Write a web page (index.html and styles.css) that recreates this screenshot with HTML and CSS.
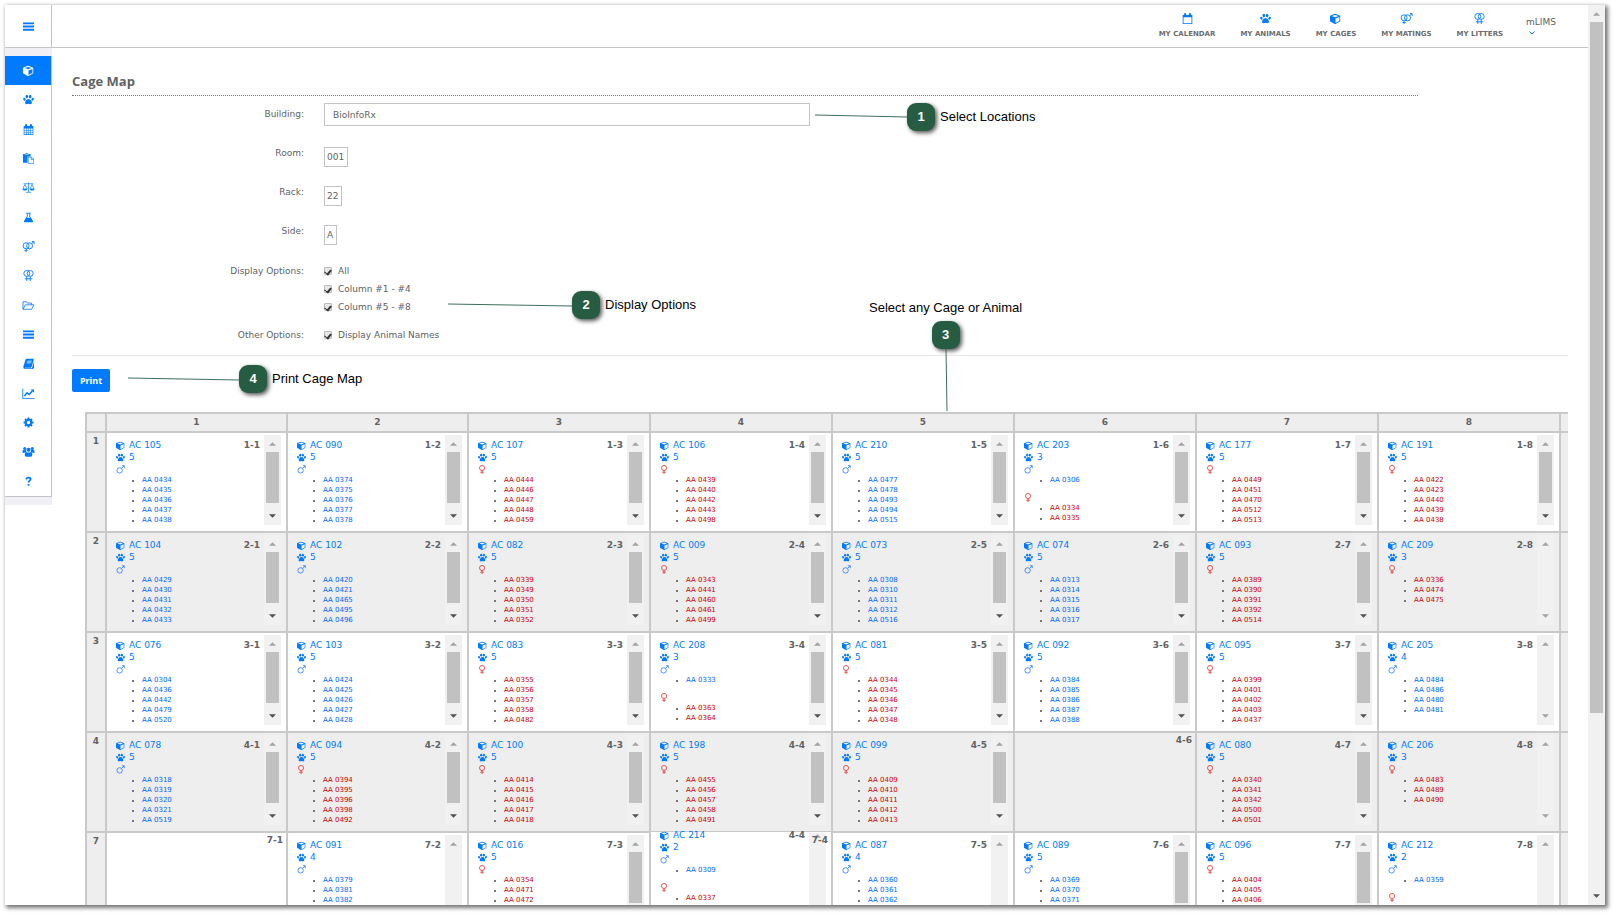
FILE: index.html
```html
<!DOCTYPE html>
<html lang="en">
<head>
<meta charset="utf-8">
<title>Cage Map</title>
<link rel="stylesheet" href="styles.css">
</head>
<body>
<svg class="sprite" aria-hidden="true">
  <symbol id="cube" viewBox="0 0 1792 1792"><path d="M896 1629l640-349v-636l-640 233v752zm768-1117v768q0 35-18 65t-49 47l-704 384q-28 16-61 16t-61-16l-704-384q-31-17-49-47t-18-65v-768q0-40 23-73t61-47l704-256q22-8 44-8t44 8l704 256q38 14 61 47t23 73zM832 700l560-200-560-190-560 190z" fill-rule="evenodd"/></symbol>
  <symbol id="paw" viewBox="0 0 16 16"><ellipse cx="5.6" cy="3.8" rx="1.9" ry="2.6"/><ellipse cx="10.4" cy="3.8" rx="1.9" ry="2.6"/><ellipse cx="2" cy="7.6" rx="1.7" ry="2.2" transform="rotate(-20 2 7.6)"/><ellipse cx="14" cy="7.6" rx="1.7" ry="2.2" transform="rotate(20 14 7.6)"/><path d="M8 7.2c2.4 0 5 3.4 5 5.6 0 1.600-1.300 2-2.400 2-1 0-1.600-.6-2.600-.6s-1.700.6-2.700.6c-1.200 0-2.300-.5-2.300-2C3 10.600 5.600 7.200 8 7.200z"/></symbol>
  <symbol id="calendar" viewBox="0 0 16 16"><path d="M1 3h2V1.500a1 1 0 0 1 3 0V3h4V1.500a1 1 0 0 1 3 0V3h2v13H1zm1 3.500V9h2.400V6.500zm3.200 0V9h2.400V6.500zm3.200 0V9h2.400V6.500zm3.200 0V9H14V6.500zM2 9.800v2.200h2.400V9.800zm3.200 0v2.200h2.400V9.800zm3.200 0v2.200h2.400V9.800zm3.200 0v2.200H14V9.800zM2 12.800V15h2.400v-2.200zm3.200 0V15h2.400v-2.200zm3.200 0V15h2.400v-2.200zm3.200 0V15H14v-2.200z" fill-rule="evenodd"/></symbol>
  <symbol id="calendar-o" viewBox="0 0 16 16"><path d="M1 3h2V1.500a1 1 0 0 1 3 0V3h4V1.500a1 1 0 0 1 3 0V3h2v13H1zm1.200 3v8.800h11.600V6z" fill-rule="evenodd"/></symbol>
  <symbol id="paste" viewBox="0 0 16 16"><path d="M0 1.500h3.500V.5h4v1H11V5H6.500v9H0zM2.500 2v1h6V2z" fill-rule="evenodd"/><path d="M7.500 6h5l3 3v6.500h-8z M12 6v3.500h3.500" fill="none" stroke="currentColor"/></symbol>
  <symbol id="scale" viewBox="0 0 18 16"><path d="M9 1v13.500M2 2.500h14M5 15h8M.8 10l3-6.500L6.800 10zM11.200 10l3-6.500 3 6.500z" fill="none" stroke="currentColor"/><path d="M.3 10h7a3.500 2.200 0 0 1-7 0zM10.700 10h7a3.500 2.200 0 0 1-7 0z"/></symbol>
  <symbol id="flask" viewBox="0 0 16 16"><path d="M4.500 1h7v1.300h-1v4.200l4 6.500q1 2-1.200 2H2.700q-2.200 0-1.200-2l4-6.500V2.300h-1zm2.300 1.300v4.600L5.800 8.500h4.400l-1-1.600V2.300z" fill-rule="evenodd"/></symbol>
  <symbol id="mating" viewBox="0 0 18 16"><g fill="none" stroke="currentColor" stroke-width="1.300"><circle cx="5.500" cy="7" r="4.400"/><circle cx="10.500" cy="7" r="4.400"/><path d="M5.500 11.400V16M3.200 13.800h4.600M13.600 3.900L17 1M13.800.9h3.400V4.200"/></g></symbol>
  <symbol id="litters" viewBox="0 0 18 16"><g fill="none" stroke="currentColor" stroke-width="1.300"><circle cx="6.500" cy="5" r="4.300"/><circle cx="11.500" cy="5" r="4.300"/><path d="M6.500 9.300V16M11.500 9.300V16M3.500 12.800h11"/></g></symbol>
  <symbol id="folder" viewBox="0 0 18 16"><path d="M1 13V2.500h5l1.500 2h6V7M1 13.500L4.500 7H17l-3.500 6.500z" fill="none" stroke="currentColor" stroke-width="1.200" stroke-linejoin="round"/></symbol>
  <symbol id="bars" viewBox="0 0 16 16"><path d="M0 2h16v2.900H0zM0 6.600h16v2.900H0zM0 11.200h16v2.900H0z"/></symbol>
  <symbol id="book" viewBox="0 0 16 16"><path d="M5.500 1H15q1 .4.700 1.500l-3 10q-.4 1.500-1.700 1.500H3q-.8.200-.6.800H13l3-9.500V14q-1 2-2.500 2H2.500Q0 15.500.5 12.500L3.500 3Q4 1 5.500 1zm.8 3-.3 1h6.500l.3-1zm-.8 2.500-.3 1h6.500l.3-1z" fill-rule="evenodd"/></symbol>
  <symbol id="chart" viewBox="0 0 18 16"><path d="M.6 1v14.400H18" fill="none" stroke="currentColor" stroke-width="1.200"/><path d="M3 11.500l4-4.500 3 2.500 4.500-5" fill="none" stroke="currentColor" stroke-width="2.200"/><path d="M12 2h5v5z"/></symbol>
  <symbol id="cog" viewBox="0 0 16 16"><circle cx="8" cy="8" r="4" fill="none" stroke="currentColor" stroke-width="3"/><path d="M8 .8v2.800M8 12.400v2.800M.8 8h2.800M12.400 8h2.800M2.900 2.900l2 2M11.100 11.100l2 2M13.100 2.900l-2 2M4.900 11.100l-2 2" fill="none" stroke="currentColor" stroke-width="3"/></symbol>
  <symbol id="users" viewBox="0 0 18 16"><circle cx="3.500" cy="3.500" r="2.200"/><circle cx="14.500" cy="3.500" r="2.200"/><circle cx="9" cy="5.500" r="3"/><path d="M0 9q0-3.200 2-3.200h3.200Q5 8 6.500 9H3.800L3 10Q0 10 0 9zM18 9q0-3.200-2-3.200h-3.200Q13 8 11.500 9h2.700l.8 1q3 0 3-1zM3.500 13Q3.500 8.800 6 8.800q3 1.500 6 0 2.500 0 2.500 4.200 0 2.500-2.500 2.500H6q-2.500 0-2.500-2.500z"/></symbol>
  <symbol id="question" viewBox="0 0 16 16"><path d="M4.500 5Q5 2.300 8 2.300t3 2.400c0 2-3 2.200-3 4.800" fill="none" stroke="currentColor" stroke-width="2.600"/><path d="M6.600 11.500h2.800V14H6.600z"/></symbol>
  <symbol id="male" viewBox="0 0 10 10"><g fill="none" stroke="currentColor" stroke-width=".9"><circle cx="4" cy="6" r="3"/><path d="M6.200 3.800L9 1M6.500.8h2.700v2.700"/></g></symbol>
  <symbol id="female" viewBox="0 0 10 10"><g fill="none" stroke="currentColor" stroke-width=".9"><circle cx="4.500" cy="3.300" r="2.800"/><path d="M4.500 6.100V10M2.500 8h4"/></g></symbol>
  <symbol id="up" viewBox="0 0 8 4"><path d="M0 4l4-4 4 4z"/></symbol>
  <symbol id="down" viewBox="0 0 8 4"><path d="M0 0l4 4 4-4z"/></symbol>
</svg>

<div class="app">
  <header class="topbar">
    <button class="menu" aria-label="Menu"><svg class="icon"><use href="#bars"/></svg></button>
    <nav class="shortcuts" aria-label="Shortcuts">
      <a href="#"><svg class="icon"><use href="#calendar-o"/></svg>MY CALENDAR</a>
      <a href="#"><svg class="icon"><use href="#paw"/></svg>MY ANIMALS</a>
      <a href="#"><svg class="icon"><use href="#cube"/></svg>MY CAGES</a>
      <a href="#"><svg class="icon wide"><use href="#mating"/></svg>MY MATINGS</a>
      <a href="#"><svg class="icon wide"><use href="#litters"/></svg>MY LITTERS</a>
    </nav>
    <button class="account">mLIMS
      <svg class="chevron" viewBox="0 0 6 4"><path d="M.5.5L3 3 5.500.5" fill="none" stroke="currentColor"/></svg>
    </button>
  </header>

  <aside class="sidebar">
    <nav class="side-nav" aria-label="Sections">
      <a class="active" href="#" aria-label="Cages"><svg class="icon"><use href="#cube"/></svg></a>
      <a href="#" aria-label="Animals"><svg class="icon"><use href="#paw"/></svg></a>
      <a href="#" aria-label="Calendar"><svg class="icon"><use href="#calendar"/></svg></a>
      <a href="#" aria-label="Tasks"><svg class="icon"><use href="#paste"/></svg></a>
      <a href="#" aria-label="Weights"><svg class="icon wide"><use href="#scale"/></svg></a>
      <a href="#" aria-label="Experiments"><svg class="icon"><use href="#flask"/></svg></a>
      <a href="#" aria-label="Matings"><svg class="icon wide"><use href="#mating"/></svg></a>
      <a href="#" aria-label="Litters"><svg class="icon wide"><use href="#litters"/></svg></a>
      <a href="#" aria-label="Files"><svg class="icon wide"><use href="#folder"/></svg></a>
      <a href="#" aria-label="Lists"><svg class="icon"><use href="#bars"/></svg></a>
      <a href="#" aria-label="Records"><svg class="icon"><use href="#book"/></svg></a>
      <a href="#" aria-label="Reports"><svg class="icon wide"><use href="#chart"/></svg></a>
      <a href="#" aria-label="Settings"><svg class="icon"><use href="#cog"/></svg></a>
      <a href="#" aria-label="Users"><svg class="icon wide"><use href="#users"/></svg></a>
      <a href="#" aria-label="Help"><svg class="icon"><use href="#question"/></svg></a>
    </nav>
  </aside>

  <main class="content">
    <h1>Cage Map</h1>
    <form class="filters">
      <div class="field"><label for="building">Building:</label><select id="building" class="full"><option>BioInfoRx</option></select></div>
      <div class="field"><label for="room">Room:</label><select id="room"><option>001</option></select></div>
      <div class="field"><label for="rack">Rack:</label><select id="rack"><option>22</option></select></div>
      <div class="field"><label for="side">Side:</label><select id="side"><option>A</option></select></div>
      <div class="field options" role="group" aria-labelledby="display-label">
        <span id="display-label">Display Options:</span>
        <div class="checks">
          <label><input type="checkbox" checked>All</label>
          <label><input type="checkbox" checked>Column #1 - #4</label>
          <label><input type="checkbox" checked>Column #5 - #8</label>
        </div>
      </div>
      <div class="field options" role="group" aria-labelledby="other-label">
        <span id="other-label">Other Options:</span>
        <div class="checks"><label><input type="checkbox" checked>Display Animal Names</label></div>
      </div>
    </form>
    <hr>
    <button class="print">Print</button>
    <div class="map">
      <table>
        <colgroup><col class="rail"><col class="slim"><col class="slim"><col><col><col><col><col><col><col class="rail"></colgroup>
        <thead><tr><th></th><th>1</th><th>2</th><th>3</th><th>4</th><th>5</th><th>6</th><th>7</th><th>8</th><th></th></tr></thead>
        <tbody id="rows"></tbody>
      </table>
    </div>

    <svg class="leaders" aria-hidden="true">
      <path d="M763 67l92 2M396 256l124 2M894 301l1 62M76 330l111 2"/>
    </svg>
    <div class="callout c1"><b>1</b>Select Locations</div>
    <div class="callout c2"><b>2</b>Display Options</div>
    <div class="callout stacked c3">Select any Cage or Animal<b>3</b></div>
    <div class="callout c4"><b>4</b>Print Cage Map</div>
  </main>

  <div class="scrollbar page-scroll"><svg><use href="#up"/></svg><i></i><svg class="on"><use href="#down"/></svg></div>
</div>
<script src="cages.js"></script>
</body>
</html>
```
FILE: styles.css
```css
* { box-sizing: border-box; }

body {
  margin: 0;
  padding: 5px 9px 9px 5px;
  background: #fff;
  color: #626262;
  font: 9px/12px "DejaVu Sans", Verdana, sans-serif;
}

a { color: #007aff; text-decoration: none; }
button, select { font: inherit; color: inherit; }
.sprite { position: absolute; width: 0; height: 0; }
svg { fill: currentColor; }

.app {
  display: grid;
  grid-template: 43px 1fr / 47px 1fr 17px;
  height: calc(100vh - 14px);
  overflow: hidden;
  box-shadow: 2px 2px 4px 1px #777;
}

.icon { width: 11px; height: 11px; flex: none; color: #007aff; }
.icon.wide { width: 13px; }

/* Top bar */
.topbar {
  grid-column: 1 / 3;
  display: flex;
  border-bottom: 1px solid #c4c4c8;
}
.menu {
  display: grid;
  place-items: center;
  width: 47px;
  padding: 1px 0 0;
  border: 0;
  border-right: 1px solid #c4c4c8;
  background: none;
}
.shortcuts {
  display: flex;
  gap: 25px;
  margin-left: auto;
  padding-top: 8px;
}
.shortcuts a {
  display: flex;
  flex-direction: column;
  align-items: center;
  gap: 4px;
  color: #6c6c6c;
  font-size: 7px;
  font-weight: bold;
}
.account {
  display: flex;
  flex-direction: column;
  align-items: flex-start;
  margin: 0 32px 0 23px;
  padding: 11px 0 0;
  border: 0;
  background: none;
}
.chevron { width: 6px; height: 4px; margin: 3px; color: #007aff; }

/* Sidebar */
.sidebar {
  align-self: start;
  padding: 8px 0;
  background: #f0eff5;
}
.side-nav {
  display: grid;
  grid-auto-rows: 1fr;
  height: 441px;
  border: solid #c4c4c8;
  border-width: 0 1px 1px 0;
  background: #fff;
}
.side-nav a { display: grid; place-items: center; }
.side-nav .active { background: #007aff; }
.side-nav .active .icon { color: #fff; }

/* Content */
.content {
  position: relative;
  min-width: 0;
  overflow: hidden;
  padding: 23px 20px 0;
}
h1 {
  width: 90%;
  height: 25px;
  margin: 0;
  border-bottom: 1px dotted #777;
  font: bold 13px/20px "Open Sans", sans-serif;
}
.filters { padding-top: 7px; }
.field {
  display: flex;
  gap: 20px;
  height: 39px;
}
.field > label, .field > span {
  width: 232px;
  padding-top: 5px;
  text-align: right;
}
.field select {
  appearance: none;
  align-self: flex-start;
  height: 20px;
  margin-top: 5px;
  padding: 0 2px;
  border: 1px solid #c4c4c8;
  border-radius: 0;
  background: #fff;
}
.field .full {
  width: 486px;
  height: 23px;
  margin-top: 0;
  padding: 0 8px;
}
.field.options { height: auto; padding: 1px 0 9px; }
.checks label {
  display: flex;
  align-items: center;
  gap: 6px;
  height: 18px;
  padding-top: 4px;
}
.checks input {
  appearance: none;
  display: grid;
  place-items: center;
  width: 8px;
  height: 8px;
  margin: 0;
  border: 1px solid #bbb;
  border-radius: 1px;
  background: #e8e8e8;
}
.checks input:checked::before {
  content: "";
  width: 5px;
  height: 3px;
  border: solid #333;
  border-width: 0 0 2px 1px;
  transform: rotate(-50deg);
}
hr {
  height: 1px;
  margin: 4px 0 13px;
  border: 0;
  background: #e8e8e8;
}
.print {
  display: block;
  height: 23px;
  padding: 0 8px;
  border: 0;
  border-radius: 2px;
  background: #007aff;
  color: #fff;
  font: bold 9px/12px "Noto Sans", sans-serif;
}

/* Cage table */
.map { margin: 20px 0 0 13px; overflow: hidden; }
table {
  width: 1494px;
  table-layout: fixed;
  border-collapse: collapse;
}
col { width: 182px; }
.slim { width: 181px; }
.rail { width: 20px; }
th, td { border: 2px solid #c9c9c9; padding: 0; vertical-align: top; }
th { height: 19px; background: #eee; }
tbody th { padding-top: 2px; }
thead th { vertical-align: middle; line-height: 11px; }
tbody tr { height: 100px; }
tbody tr:nth-child(even) { background: #eee; }
.slot { display: block; padding: 1px 3px; text-align: right; font-weight: bold; }
.cage {
  display: flex;
  height: 90px;
  margin: 2px 5px 0 2px;
}
.info { flex: 1; padding: 4px 4px 0 7px; }
.line { display: flex; align-items: center; gap: 4px; height: 12px; }
.line .icon { width: 9px; height: 9px; }
.line b { margin-left: auto; }
.info .female { color: #d33; }
.info .male { color: #2a7bff; }
.info ul {
  margin: 0 0 6px;
  padding: 0 0 0 26px;
  list-style: none;
  font-size: 7px;
  line-height: 10px;
}
.info li { position: relative; }
.info li::before {
  content: "";
  position: absolute;
  left: -10px;
  top: 5px;
  width: 2px;
  height: 2px;
  background: #777;
}
.info li .f { color: #c00; }
.info li .m { color: #06f; }

/* A cage listed under another slot rides over the row line */
.spill {
  position: relative;
  display: flow-root;
  height: 90px;
  margin-top: -1px;
  background: #fff;
}
.spill .cage { margin-top: -7px; height: 98px; }
.spill .scrollbar { margin-top: 8px; padding-top: 1px; }
.spill .slot { position: absolute; top: 1px; right: 0; }

/* Scrollbars */
.scrollbar {
  display: flex;
  flex-direction: column;
  align-items: center;
  width: 17px;
  padding: 7px 0;
  background: #f1f1f1;
  color: #a3a3a3;
}
.scrollbar svg { width: 7px; height: 4px; flex: none; }
.scrollbar .on { margin-top: auto; color: #505050; }
.scrollbar .off { margin-top: auto; }
.scrollbar i { width: 13px; height: 51px; margin-top: 6px; background: #c1c1c1; }
.page-scroll { grid-area: 1 / 3 / 3 / 4; }
.page-scroll i { height: 78%; }

/* Callouts */
.leaders {
  position: absolute;
  inset: 0;
  width: 100%;
  height: 100%;
  fill: none;
  stroke: #3d6f58;
  pointer-events: none;
}
.callout {
  position: absolute;
  display: flex;
  align-items: center;
  gap: 5px;
  color: #000;
  font: 13px/16px "Liberation Sans", Arial, sans-serif;
}
.callout b {
  display: grid;
  place-items: center;
  width: 28px;
  height: 28px;
  border-radius: 9px;
  background: #265c42;
  box-shadow: 2px 2px 4px #555;
  color: #fff;
}
.stacked { flex-direction: column; }
.c1 { left: 855px; top: 55px; }
.c2 { left: 520px; top: 243px; }
.c3 { left: 817px; top: 252px; }
.c4 { left: 187px; top: 317px; }
```
FILE: cages.js
```js
// slot: [cage, male ids, female ids, optional total, more females below]
const rows = [
  [1, [
    ["105", "0434 0435 0436 0437 0438", ""], ["090", "0374 0375 0376 0377 0378", ""],
    ["107", "", "0444 0446 0447 0448 0459"], ["106", "", "0439 0440 0442 0443 0498"],
    ["210", "0477 0478 0493 0494 0515", ""], ["203", "0306", "0334 0335"],
    ["177", "", "0449 0451 0470 0512 0513"], ["191", "", "0422 0423 0440 0439 0438"]]],
  [2, [
    ["104", "0429 0430 0431 0432 0433", ""], ["102", "0420 0421 0465 0495 0496", ""],
    ["082", "", "0339 0349 0350 0351 0352"], ["009", "", "0343 0441 0460 0461 0499"],
    ["073", "0308 0310 0311 0312 0516", ""], ["074", "0313 0314 0315 0316 0317", ""],
    ["093", "", "0389 0390 0391 0392 0514"], ["209", "", "0336 0474 0475"]]],
  [3, [
    ["076", "0304 0436 0442 0479 0520", ""], ["103", "0424 0425 0426 0427 0428", ""],
    ["083", "", "0355 0356 0357 0358 0482"], ["208", "0333", "0363 0364"],
    ["081", "", "0344 0345 0346 0347 0348"], ["092", "0384 0385 0386 0387 0388", ""],
    ["095", "", "0399 0401 0402 0403 0437"], ["205", "0484 0486 0480 0481", ""]]],
  [4, [
    ["078", "0318 0319 0320 0321 0519", ""], ["094", "", "0394 0395 0396 0398 0492"],
    ["100", "", "0414 0415 0416 0417 0418"], ["198", "", "0455 0456 0457 0458 0491"],
    ["099", "", "0409 0410 0411 0412 0413"], null,
    ["080", "", "0340 0341 0342 0500 0501"], ["206", "", "0483 0489 0490"]]],
  [7, [
    null, ["091", "0379 0381 0382", "", 4],
    ["016", "", "0354 0471 0472", 5], ["214", "0309", "0337"],
    ["087", "0360 0361 0362", "", 4], ["089", "0369 0370 0371", "", 5],
    ["096", "", "0404 0405 0406", 5], ["212", "0359", "", 2, true]]]
];

const icon = (name, cls = "") => `<svg class="icon ${cls}"><use href="#${name}"/></svg>`;

function group(sex, ids) {
  const items = ids.map(id => `<li><a class="${sex[0]}" href="#">AA ${id}</a></li>`).join("");
  return `<div class="line">${icon(sex, sex)}</div><ul>${items}</ul>`;
}

function cage([name, males, females, total, femaleNext], slot) {
  const m = males ? males.split(" ") : [];
  const f = females ? females.split(" ") : [];
  const count = total || m.length + f.length;
  const scrolls = count === 5 || (m.length && f.length && name !== "214");
  return `<div class="cage"><div class="info">
    <div class="line">${icon("cube")}<a href="#">AC ${name}</a><b>${slot}</b></div>
    <div class="line">${icon("paw")}<a href="#">${count}</a></div>
    ${m.length ? group("male", m) : ""}${f.length || femaleNext ? group("female", f) : ""}
    </div><div class="scrollbar"><svg><use href="#up"/></svg>${scrolls ? "<i></i>" : ""}
    <svg class="${scrolls ? "on" : "off"}"><use href="#down"/></svg></div></div>`;
}

document.getElementById("rows").innerHTML = rows.map(([row, cells]) =>
  `<tr><th>${row}</th>` + cells.map((data, i) => {
    const slot = `${row}-${i + 1}`;
    if (!data) return `<td><span class="slot">${slot}</span></td>`;
    if (data[0] === "214") return `<td><div class="spill">${cage(data, "4-4")}<span class="slot">${slot}</span></div></td>`;
    return `<td>${cage(data, slot)}</td>`;
  }).join("") + "<th></th></tr>").join("");
```
